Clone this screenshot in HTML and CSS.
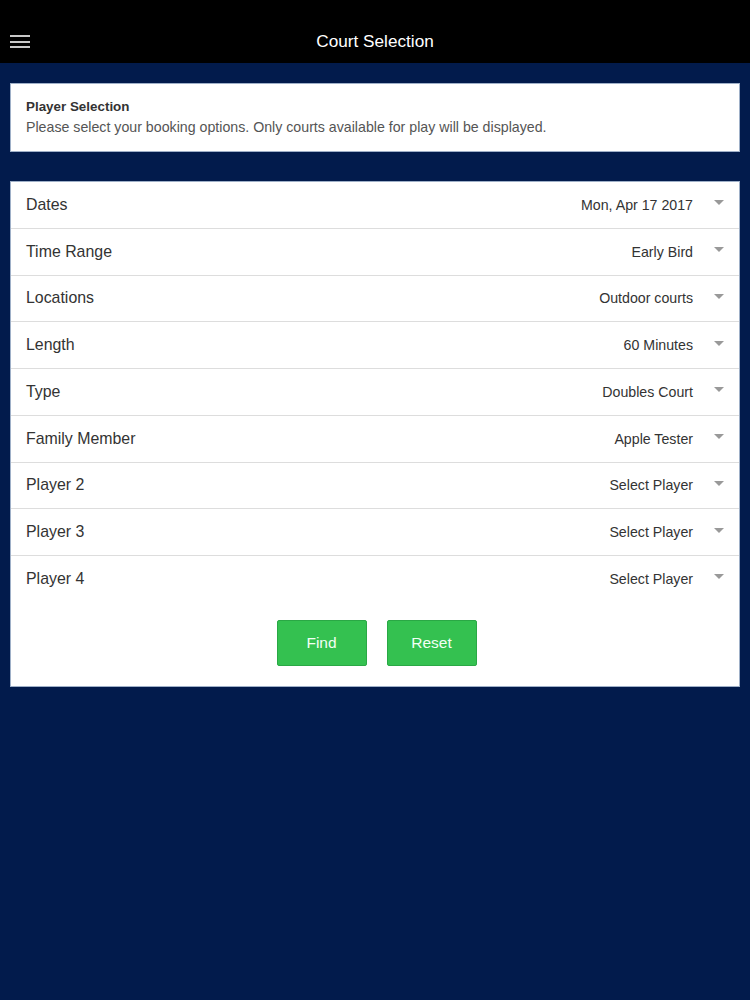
FILE: index.html
```html
<!DOCTYPE html>
<html lang="en">
<head>
    <meta charset="UTF-8">
    <meta name="viewport" content="width=device-width, initial-scale=1.0">
    <title>Court Selection</title>
    <link rel="stylesheet" href="styles.css">
</head>
<body>
    <header class="topbar">
        <button class="menu-btn" aria-label="Menu">
            <span></span><span></span><span></span>
        </button>
        <h1>Court Selection</h1>
    </header>

    <main class="content">
        <div class="card intro">
            <h2>Player Selection</h2>
            <p>Please select your booking options. Only courts available for play will be displayed.</p>
        </div>

        <div class="card form">
            <div class="row"><span class="label">Dates</span><span class="value">Mon, Apr 17 2017</span><span class="caret"></span></div>
            <div class="row"><span class="label">Time Range</span><span class="value">Early Bird</span><span class="caret"></span></div>
            <div class="row"><span class="label">Locations</span><span class="value">Outdoor courts</span><span class="caret"></span></div>
            <div class="row"><span class="label">Length</span><span class="value">60 Minutes</span><span class="caret"></span></div>
            <div class="row"><span class="label">Type</span><span class="value">Doubles Court</span><span class="caret"></span></div>
            <div class="row"><span class="label">Family Member</span><span class="value">Apple Tester</span><span class="caret"></span></div>
            <div class="row"><span class="label">Player 2</span><span class="value">Select Player</span><span class="caret"></span></div>
            <div class="row"><span class="label">Player 3</span><span class="value">Select Player</span><span class="caret"></span></div>
            <div class="row last"><span class="label">Player 4</span><span class="value">Select Player</span><span class="caret"></span></div>

            <div class="actions">
                <button class="green-btn">Find</button>
                <button class="green-btn">Reset</button>
            </div>
        </div>
    </main>
</body>
</html>
```

FILE: styles.css
```css
html, body {
    margin: 0;
    padding: 0;
}
body {
    font-family: 'Liberation Sans', Arial, sans-serif;
    background-color: #021b4c;
    min-height: 1000px;
}
.topbar {
    background: #000;
    height: 63px;
    display: flex;
    align-items: center;
    justify-content: center;
    position: relative;
}
.topbar h1 {
    margin: 20px 0 0;
    color: #fff;
    font-size: 17.2px;
    font-weight: normal;
}
.menu-btn {
    position: absolute;
    left: 10px;
    top: 35px;
    width: 20px;
    height: 13px;
    padding: 0;
    border: none;
    background: none;
    display: flex;
    flex-direction: column;
    justify-content: space-between;
}
.menu-btn span {
    display: block;
    height: 2px;
    width: 20px;
    background: #c8c8c8;
}
.content {
    padding: 20px 10px;
}
.card {
    background: #fff;
    border: 1px solid #9fb0c8;
}
.intro {
    padding: 15px 15px 16px;
    margin-bottom: 29px;
}
.intro h2 {
    margin: 0 0 5px;
    font-size: 13.4px;
    line-height: 15px;
    font-weight: bold;
    color: #333;
}
.intro p {
    margin: 0;
    font-size: 14.2px;
    line-height: 16px;
    color: #555;
}
.row {
    display: flex;
    align-items: center;
    height: 45.75px;
    border-bottom: 1px solid #ddd;
    padding: 0 15px;
}
.row.last {
    border-bottom: none;
}
.label {
    flex: 1;
    font-size: 15.9px;
    color: #333;
}
.value {
    font-size: 14.2px;
    color: #333;
}
.caret {
    width: 0;
    height: 0;
    border-left: 5px solid transparent;
    border-right: 5px solid transparent;
    border-top: 5px solid #999;
    margin-left: 21px;
    margin-top: -4px;
}
.actions {
    display: flex;
    justify-content: center;
    gap: 20px;
    padding: 18px 0 20px 3px;
}
.green-btn {
    width: 90px;
    height: 46px;
    background: #34c150;
    border: 1px solid #2aa845;
    border-radius: 2px;
    color: #f2fff4;
    font-family: inherit;
    font-size: 15.5px;
    cursor: pointer;
}
```
